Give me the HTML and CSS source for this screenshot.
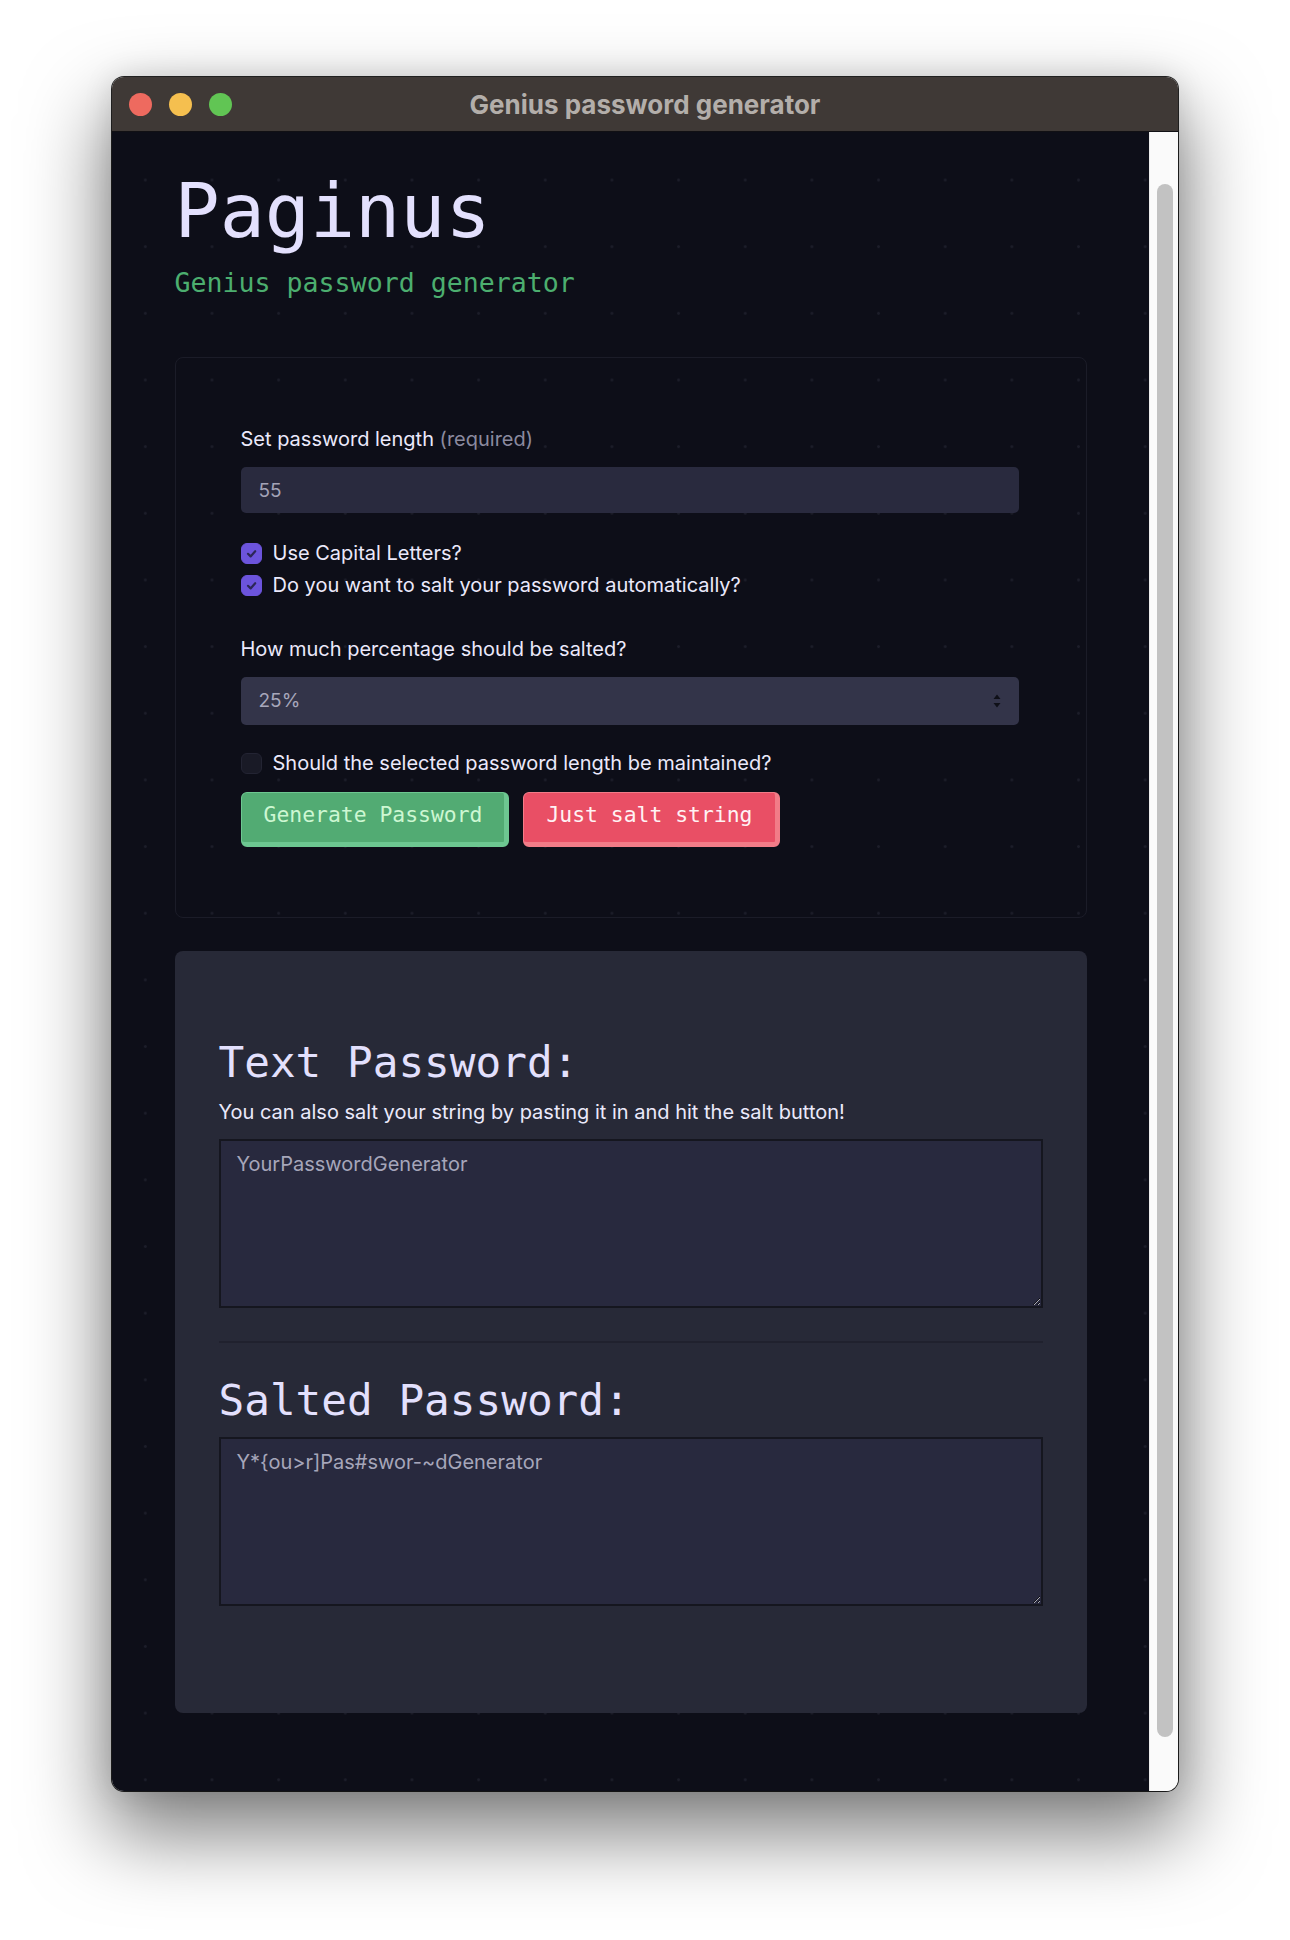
FILE: index.html
```html
<!DOCTYPE html>
<html lang="en">
<head>
<meta charset="utf-8">
<title>Genius password generator</title>
<link rel="stylesheet" href="styles.css">
</head>
<body>
<div class="window">
  <div class="titlebar">
    <div class="lights">
      <span class="light red"></span>
      <span class="light yellow"></span>
      <span class="light green"></span>
    </div>
    <div class="title">Genius password generator</div>
    <div></div>
  </div>
  <div class="viewport">
    <main class="page">
      <div class="container">
        <h1 class="brand">Paginus</h1>
        <p class="tagline">Genius password generator</p>

        <section class="card form-card">
          <label class="field-label">Set password length <span class="muted">(required)</span></label>
          <input class="text-input" type="text" value="55">

          <div class="checks">
            <label class="check">
              <span class="box on"><svg viewBox="0 0 21 21" width="21" height="21"><path d="M7 10.8l2.6 2.6 4.6-5.2" fill="none" stroke="#2c2756" stroke-width="2.2" stroke-linecap="round" stroke-linejoin="round"/></svg></span>
              Use Capital Letters?
            </label>
            <label class="check">
              <span class="box on"><svg viewBox="0 0 21 21" width="21" height="21"><path d="M7 10.8l2.6 2.6 4.6-5.2" fill="none" stroke="#2c2756" stroke-width="2.2" stroke-linecap="round" stroke-linejoin="round"/></svg></span>
              Do you want to salt your password automatically?
            </label>
          </div>

          <label class="field-label second">How much percentage should be salted?</label>
          <div class="select">
            <span>25%</span>
            <svg class="arrows" viewBox="0 0 8 14" width="8" height="14"><path d="M4 0.5L7.5 5H0.5z M4 13.5L7.5 9H0.5z" fill="#0f1018"/></svg>
          </div>

          <label class="check single">
            <span class="box"></span>
            Should the selected password length be maintained?
          </label>

          <div class="actions">
            <button class="btn btn-green" type="button">Generate Password</button>
            <button class="btn btn-red" type="button">Just salt string</button>
          </div>
        </section>

        <section class="card output-card">
          <h2 class="out-title">Text Password:</h2>
          <p class="hint">You can also salt your string by pasting it in and hit the salt button!</p>
          <textarea class="area">YourPasswordGenerator</textarea>
          <hr class="divider">
          <h2 class="out-title salted">Salted Password:</h2>
          <textarea class="area tight">Y*{ou>r]Pas#swor-~dGenerator</textarea>
        </section>
      </div>
    </main>
    <div class="scrollbar"><div class="thumb"></div></div>
  </div>
</div>
</body>
</html>
```

FILE: styles.css
```css
* { box-sizing: border-box; }

html, body {
  margin: 0;
  padding: 0;
  background: #ffffff;
}

body {
  font-family: Inter, "Noto Sans", sans-serif;
  height: 1940px;
  overflow: hidden;
}

.window {
  width: 1066px;
  height: 1714px;
  margin: 77px auto 0;
  border-radius: 12px;
  overflow: hidden;
  display: flex;
  flex-direction: column;
  box-shadow: 0 0 0 1px rgba(0, 0, 0, 0.85),
              0 38px 80px 6px rgba(0, 0, 0, 0.5),
              0 0 30px rgba(0, 0, 0, 0.12);
}

.titlebar {
  height: 55px;
  flex: none;
  background: #3f3936;
  border-bottom: 1px solid #111014;
  display: grid;
  grid-template-columns: 1fr auto 1fr;
  align-items: center;
}

.lights {
  display: flex;
  gap: 17px;
  padding-left: 17px;
  padding-top: 1px;
}

.light {
  width: 23px;
  height: 23px;
  border-radius: 50%;
  display: block;
}
.light.red { background: #ee6a5f; }
.light.yellow { background: #f5bf4f; }
.light.green { background: #61c554; }

.title {
  font-family: Inter, sans-serif;
  font-weight: 700;
  font-size: 26px;
  color: #b3aeaa;
}

.viewport {
  flex: 1;
  display: flex;
  min-height: 0;
}

.page {
  flex: 1;
  background-color: #0d0e18;
  background-image: radial-gradient(circle, #1c1d29 1.1px, transparent 1.7px);
  background-size: 66.67px 66.67px;
  background-position: 0 14.7px;
  overflow: hidden;
}

.scrollbar {
  width: 29px;
  flex: none;
  background: #fafafa;
  border-left: 1px solid #ececec;
  padding: 52px 0 0 7px;
}

.thumb {
  width: 16px;
  height: 1553px;
  border-radius: 8px;
  background: #c2c2c2;
}

.container {
  width: 912px;
  margin: 0 auto;
  padding-top: 34px;
}

.brand {
  margin: 0;
  font-family: "DejaVu Sans Mono", monospace;
  font-weight: normal;
  font-size: 75px;
  line-height: 91px;
  color: #e3e0fd;
}

.tagline {
  margin: 9.5px 0 0;
  font-family: "DejaVu Sans Mono", monospace;
  font-size: 26.6px;
  line-height: 32px;
  color: #4cae6f;
}

.card {
  border-radius: 8px;
}

.form-card {
  margin-top: 58.5px;
  border: 1px solid #1b1c28;
  padding: 69px 67px 70px 65px;
}

.field-label {
  display: block;
  font-size: 20px;
  line-height: 24px;
  color: #ebe9fb;
  margin-bottom: 16px;
}
.field-label.second { margin-top: 38.5px; }

.muted { color: #8b8a9f; }

.text-input {
  display: block;
  width: 100%;
  height: 46px;
  border: none;
  border-radius: 5px;
  background: #292a3e;
  padding: 0 18px;
  font-family: Inter, sans-serif;
  font-size: 19px;
  color: #a3a3b7;
  outline: none;
}

.checks {
  margin-top: 27px;
  display: flex;
  flex-direction: column;
  gap: 6px;
}

.check {
  display: flex;
  align-items: center;
  gap: 11px;
  height: 26px;
  font-size: 20px;
  line-height: 24px;
  color: #ebe9fb;
}
.check.single { margin-top: 25.5px; }

.box {
  width: 21px;
  height: 21px;
  flex: none;
  border-radius: 6px;
  background: #191a26;
  border: 1px solid #232433;
  display: block;
}
.box svg { display: block; margin: -1px; }
.box.on {
  background: #6c54dc;
  border-color: #6c54dc;
}

.select {
  height: 48px;
  border-radius: 5px;
  background: #333449;
  padding: 0 18px;
  display: flex;
  align-items: center;
  justify-content: space-between;
  font-size: 19px;
  color: #a7a7bb;
}

.actions {
  margin-top: 15.5px;
  display: flex;
  gap: 14px;
}

.btn {
  font-family: "DejaVu Sans Mono", monospace;
  font-size: 21.4px;
  line-height: 26px;
  padding: 9px 22px 14px;
  border-style: solid;
  border-width: 1px 5px 5px 1px;
  border-radius: 6px;
  cursor: pointer;
}

.btn-green {
  background: #52ab73;
  border-color: #6dc791;
  color: #cdf7d2;
}

.btn-red {
  background: #e94f65;
  border-color: #f27c88;
  color: #fff2f4;
}

.output-card {
  margin-top: 33px;
  background: #272937;
  padding: 44px 44px 107px;
}

.out-title {
  margin: 42px 0 0;
  font-family: "DejaVu Sans Mono", monospace;
  font-weight: normal;
  font-size: 42.7px;
  line-height: 50px;
  color: #e3e0fd;
}
.out-title.salted { margin-top: 32px; }

.hint {
  margin: 13px 0 0;
  font-size: 20px;
  line-height: 24px;
  color: #ebe9fb;
}

.area {
  display: block;
  width: 100%;
  height: 169px;
  margin-top: 15px;
  border: 2px solid #15161f;
  background: #28293e;
  padding: 11px 16px;
  font-family: Inter, sans-serif;
  font-size: 20px;
  line-height: 24px;
  color: #a6a6ba;
  resize: both;
  outline: none;
  color-scheme: dark;
}
.area.tight { margin-top: 12px; }

.divider {
  margin: 33px 0 0;
  border: none;
  border-top: 2px solid #20212e;
  height: 0;
}
```
